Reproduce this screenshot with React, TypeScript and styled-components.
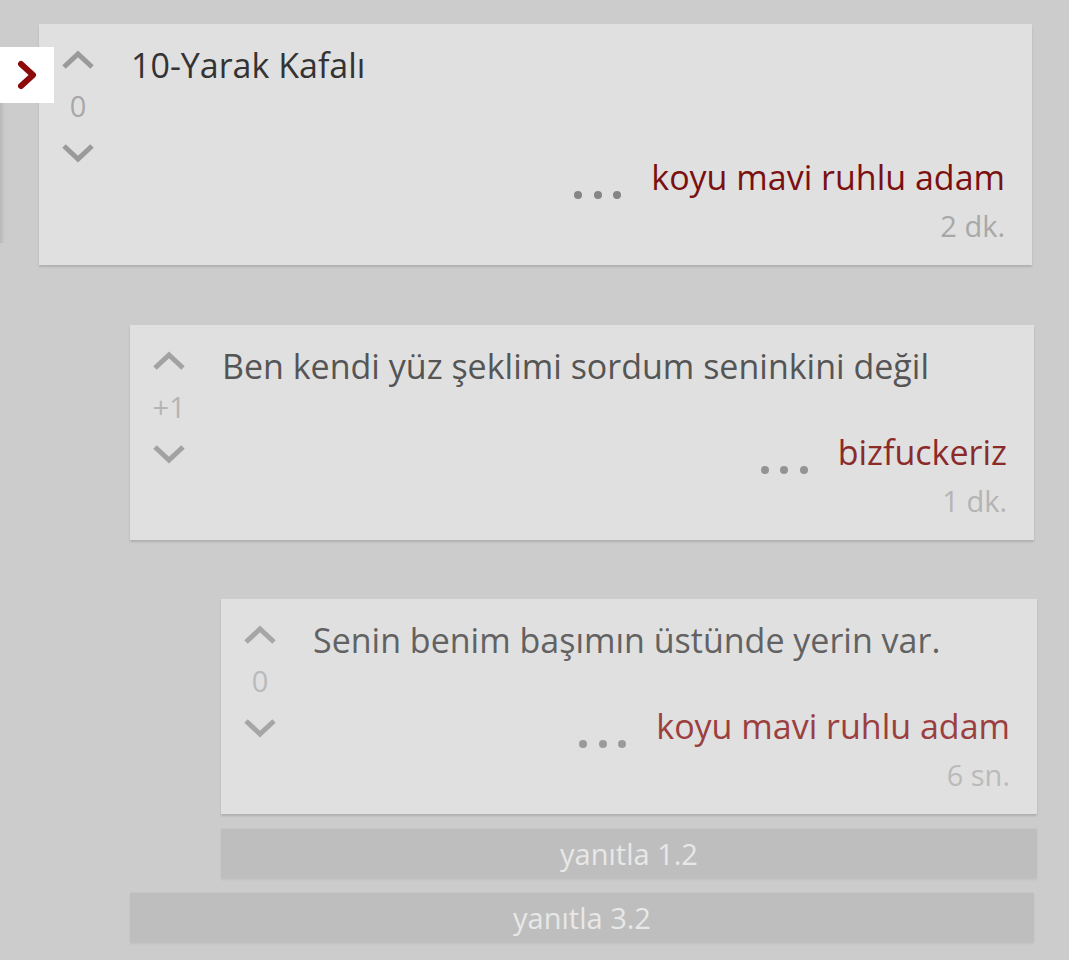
import React from 'react';
import styled, { createGlobalStyle } from 'styled-components';

const GlobalStyle = createGlobalStyle`
  html, body {
    margin: 0;
    padding: 0;
    background: #cccccc;
    font-family: "Open Sans", "Noto Sans", "Liberation Sans", sans-serif;
  }
`;

// text colours fade a little with every nesting level
const tones = [
  { text: '#333333', author: '#7a1010', time: '#a8a8a8', dot: '#858585', vote: '#9a9a9a' },
  { text: '#555555', author: '#8c2a2a', time: '#b4b4b4', dot: '#939393', vote: '#a2a2a2' },
  { text: '#626262', author: '#9b3f3f', time: '#bababa', dot: '#9a9a9a', vote: '#a6a6a6' },
];

const Page = styled.div`
  position: relative;
  min-height: 960px;
  padding: 24px 37px 0 39px;
  box-sizing: border-box;
`;

const DrawerTab = styled.button`
  position: absolute;
  left: 0;
  top: 47px;
  width: 54px;
  height: 56px;
  border: 0;
  padding: 0;
  background: #ffffff;
  display: flex;
  align-items: center;
  justify-content: center;
  cursor: pointer;
`;

const DrawerEdge = styled.div`
  position: absolute;
  left: 0;
  top: 103px;
  width: 5px;
  height: 140px;
  background: linear-gradient(to right, rgba(0, 0, 0, 0.1), rgba(0, 0, 0, 0));
`;

const Thread = styled.div`
  display: flex;
  flex-direction: column;
`;

const Children = styled.div<{ $gap: number; $shift: number }>`
  display: flex;
  flex-direction: column;
  margin-left: 91px;
  margin-right: -${(p) => p.$shift}px;
  margin-top: ${(p) => p.$gap}px;
`;

const Card = styled.div`
  display: grid;
  grid-template-columns: 92px 1fr;
  background: #e0e0e0;
  box-shadow: 0 2px 2px rgba(0, 0, 0, 0.14);
  padding: 0 27px 20px 0;
`;

const VoteColumn = styled.div`
  display: flex;
  flex-direction: column;
  align-items: center;
  width: 78px;
  padding-top: 26px;
`;

const VoteCount = styled.div<{ $color: string }>`
  height: 73px;
  padding-bottom: 2px;
  box-sizing: border-box;
  display: flex;
  align-items: center;
  justify-content: center;
  font-size: 29px;
  color: ${(p) => p.$color};
`;

const Body = styled.div`
  display: flex;
  flex-direction: column;
  padding-top: 19px;
`;

const Message = styled.div<{ $color: string; $extra: number }>`
  font-size: 34px;
  line-height: 44px;
  color: ${(p) => p.$color};
  margin-bottom: ${(p) => 42 + p.$extra}px;
`;

const Footer = styled.div`
  display: flex;
  justify-content: flex-end;
  align-items: flex-end;
`;

const Dots = styled.div`
  display: flex;
  gap: 11.5px;
  margin-right: 30px;
  margin-bottom: 0;
`;

const Dot = styled.span<{ $color: string }>`
  width: 8px;
  height: 8px;
  border-radius: 50%;
  background: ${(p) => p.$color};
`;

const Author = styled.div<{ $color: string }>`
  font-size: 34px;
  line-height: 44px;
  color: ${(p) => p.$color};
`;

const Time = styled.div<{ $color: string }>`
  text-align: right;
  font-size: 29px;
  line-height: 38px;
  margin-top: 8px;
  color: ${(p) => p.$color};
`;

const ReplyBar = styled.div<{ $gap: number }>`
  height: 50px;
  margin-top: ${(p) => p.$gap}px;
  background: #bebebe;
  box-shadow: 0 2px 2px rgba(0, 0, 0, 0.06);
  border-top: 1px solid #c6c6c6;
  box-sizing: border-box;
  display: flex;
  align-items: center;
  justify-content: center;
  font-size: 29px;
  color: #e8e8e8;
`;

const Chevron = ({ up, color }: { up?: boolean; color: string }) => (
  <svg width="34" height="20" viewBox="0 0 34 20">
    <path
      d={up ? 'M3 17 L17 4 L31 17' : 'M3 3 L17 16 L31 3'}
      fill="none"
      stroke={color}
      strokeWidth="5"
      strokeLinejoin="miter"
    />
  </svg>
);

type CommentProps = {
  depth: number;
  votes: string;
  text: string;
  author: string;
  time: string;
  extra?: number;
};

const Comment = ({ depth, votes, text, author, time, extra = 0 }: CommentProps) => {
  const tone = tones[depth];
  return (
    <Card>
      <VoteColumn>
        <Chevron up color={tone.vote} />
        <VoteCount $color={tone.time}>{votes}</VoteCount>
        <Chevron color={tone.vote} />
      </VoteColumn>
      <Body>
        <Message $color={tone.text} $extra={extra}>
          {text}
        </Message>
        <Footer>
          <Dots>
            <Dot $color={tone.dot} />
            <Dot $color={tone.dot} />
            <Dot $color={tone.dot} />
          </Dots>
          <Author $color={tone.author}>{author}</Author>
        </Footer>
        <Time $color={tone.time}>{time}</Time>
      </Body>
    </Card>
  );
};

export default function App() {
  return (
    <>
      <GlobalStyle />
      <Page>
        <DrawerTab aria-label="menü">
          <svg width="22" height="30" viewBox="0 0 22 30">
            <path
              d="M5 4 L17 15 L5 26"
              fill="none"
              stroke="#8b0a0a"
              strokeWidth="6"
              strokeLinecap="round"
              strokeLinejoin="round"
            />
          </svg>
        </DrawerTab>
        <DrawerEdge />
        <Thread>
          <Comment
            depth={0}
            votes="0"
            text="10-Yarak Kafalı"
            author="koyu mavi ruhlu adam"
            time="2 dk."
            extra={26}
          />
          <Children $gap={60} $shift={2}>
            <Comment
              depth={1}
              votes="+1"
              text="Ben kendi yüz şeklimi sordum seninkini değil"
              author="bizfuckeriz"
              time="1 dk."
            />
            <Children $gap={59} $shift={3}>
              <Comment
                depth={2}
                votes="0"
                text="Senin benim başımın üstünde yerin var."
                author="koyu mavi ruhlu adam"
                time="6 sn."
              />
              <ReplyBar $gap={14}>yanıtla 1.2</ReplyBar>
            </Children>
            <ReplyBar $gap={14}>yanıtla 3.2</ReplyBar>
          </Children>
        </Thread>
      </Page>
    </>
  );
}
